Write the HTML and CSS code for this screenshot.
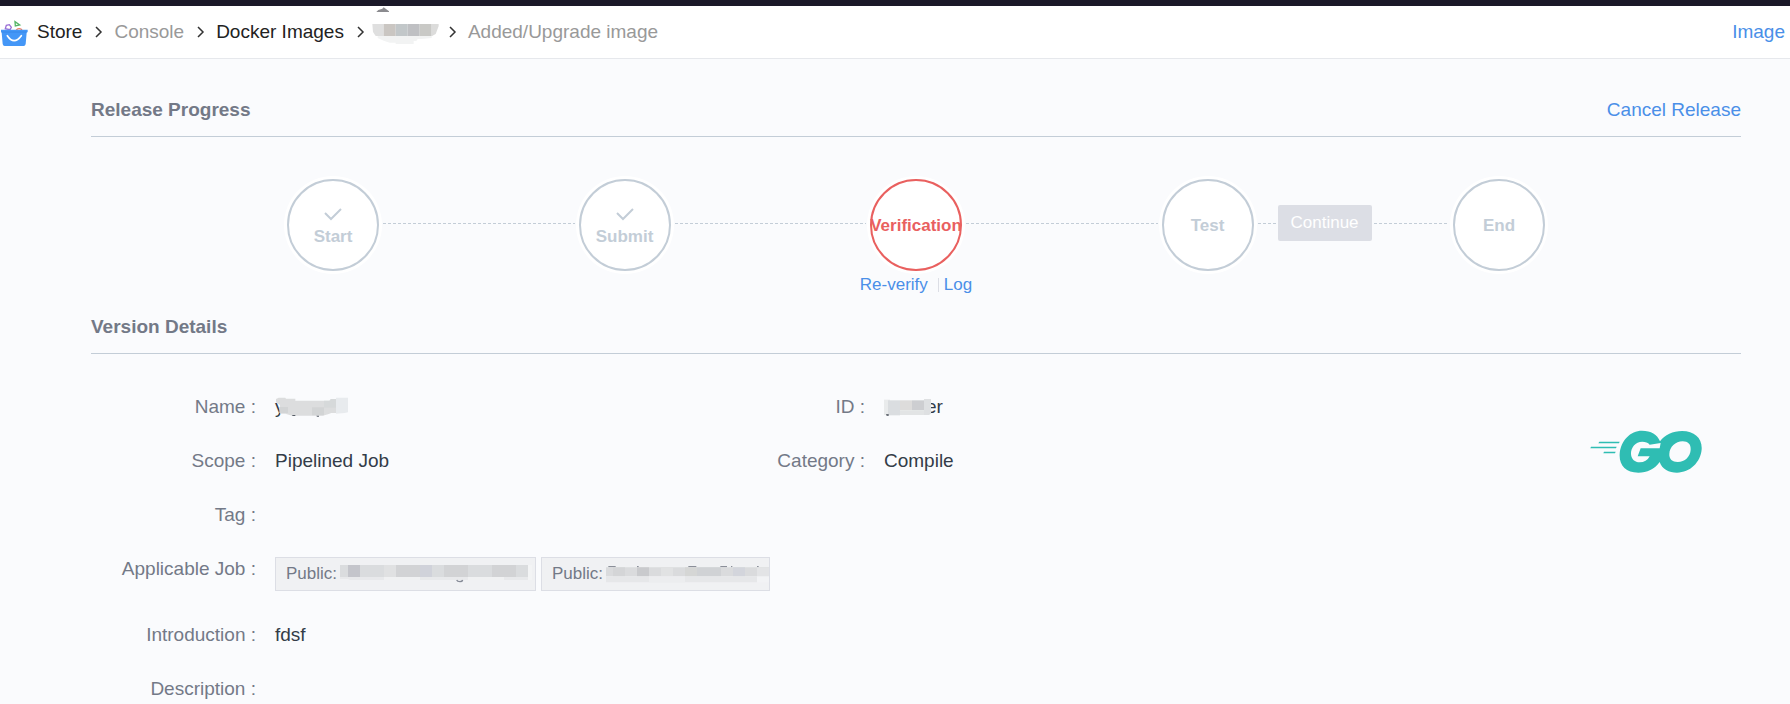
FILE: index.html
```html
<!DOCTYPE html>
<html lang="en">
<head>
<meta charset="utf-8">
<title>Release Progress</title>
<link rel="stylesheet" href="styles.css">
</head>
<body>
<div class="topbar"></div>
<header class="header">
  <nav class="crumbs" aria-label="Breadcrumb">
    <svg class="store-icon" width="28" height="28" viewBox="0 0 84 84" aria-hidden="true">
      <path d="M16 32l3-10 9-2 6 8-4 7z" fill="#fff" stroke="#9b6fd6" stroke-width="4"/>
      <path d="M45 11l1 13 13-3z" fill="#fff" stroke="#56b568" stroke-width="4"/>
      <path d="M49 37a9 8 0 0 1 17 0" fill="none" stroke="#ee7a58" stroke-width="4"/>
      <path d="M3 35h80v7l-3 2-3 34q-1 6-6 6H14q-5 0-6-6L5 44l-2-2z" fill="#4497f7"/>
      <path d="M5 42h74" stroke="#3282e4" stroke-width="2"/>
      <path d="M22 53q20 30 42 0" fill="none" stroke="#fff" stroke-width="5" stroke-linecap="round"/>
    </svg>
    <a class="crumb dark store" href="#">Store</a>
    <svg class="chev" width="8" height="12" viewBox="0 0 8 12"><path d="M1 1l5 5-5 5"/></svg>
    <a class="crumb" href="#">Console</a>
    <svg class="chev" width="8" height="12" viewBox="0 0 8 12"><path d="M1 1l5 5-5 5"/></svg>
    <a class="crumb dark" href="#">Docker Images</a>
    <svg class="chev" width="8" height="12" viewBox="0 0 8 12"><path d="M1 1l5 5-5 5"/></svg>
    <svg class="masked" width="67" height="50" viewBox="67 21 201 150" aria-hidden="true">
      <path d="M80 36l6-6 12-4 4-4 6 4 10 8v2z" fill="#8b8b8f"/>
      <path d="M68 72h34v36H78l-8-12z" fill="#dfdfdf"/>
      <path d="M102 72h36v36h-36z" fill="#cac6c2"/>
      <path d="M138 72h36v36h-36z" fill="#c2c7c9"/>
      <path d="M174 72h36v36h-36z" fill="#bfc0c3"/>
      <path d="M210 72h36v36h-36z" fill="#c9c9c6"/>
      <path d="M246 72h21v6l-9 24-12 7z" fill="#dcdcdb"/>
      <path d="M84 108h162v6l-30 3h-12l-4 6h-8v9h-54v-4h-18l-18-6-18-8z" fill="#f2f3f3"/>
    </svg>
    <svg class="chev" width="8" height="12" viewBox="0 0 8 12"><path d="M1 1l5 5-5 5"/></svg>
    <span class="crumb">Added/Upgrade image</span>
  </nav>
  <a class="link" href="#">Image</a>
</header>

<main class="page">
  <section>
    <div class="section-head">
      <h2>Release Progress</h2>
      <a class="link" href="#">Cancel Release</a>
    </div>
    <div class="progress">
      <div class="step">
        <div class="circle">
          <svg class="check" width="18" height="13" viewBox="0 0 18 13"><path d="M1 5l6 6L17 1"/></svg>
          <span>Start</span>
        </div>
      </div>
      <div class="track"><i class="dash"></i></div>
      <div class="step">
        <div class="circle">
          <svg class="check" width="18" height="13" viewBox="0 0 18 13"><path d="M1 5l6 6L17 1"/></svg>
          <span>Submit</span>
        </div>
      </div>
      <div class="track"><i class="dash"></i></div>
      <div class="step">
        <div class="circle failed"><span>Verification</span></div>
        <div class="step-links">
          <a class="link" href="#">Re-verify</a>
          <a class="link divided" href="#">Log</a>
        </div>
      </div>
      <div class="track"><i class="dash"></i></div>
      <div class="step"><div class="circle"><span>Test</span></div></div>
      <div class="track">
        <i class="dash short"></i>
        <button class="continue" type="button" disabled>Continue</button>
        <i class="dash"></i>
      </div>
      <div class="step"><div class="circle"><span>End</span></div></div>
    </div>
  </section>

  <section>
    <div class="section-head">
      <h2>Version Details</h2>
    </div>
    <div class="details">
      <dl class="fields">
        <div class="field">
          <dt>Name :</dt>
          <dd class="covered">y
            <svg class="cover" width="73" height="20" viewBox="585 292 219 60" aria-hidden="true">
              <path d="M588 298l8-4h20l2 3h28v6h102l4-5h16v42h-14l-10 4-16 4h-92l-20-6h-16v-26l-12-8z" fill="#dcddde"/>
              <path d="M598 322h26v18h-26zM696 323h36v24h-36z" fill="#d2d4d5"/>
              <path d="M732 303h18l4-5h14v26h-36z" fill="#d6d9da"/>
              <path d="M768 294h36v44l-10 2-26 2z" fill="#e8ebee"/>
              <path d="M636 346h10v3h-8zM709 348h8v3h-6z" fill="#555c66"/>
            </svg>
          </dd>
        </div>
        <div class="field">
          <dt>ID :</dt>
          <dd class="inline">
            <svg class="lead" width="47" height="17" viewBox="372 50 141 51" aria-hidden="true">
              <path d="M372 52h18v46h-18z" fill="#e9ebec"/>
              <path d="M384 54h36v45h-36z" fill="#dadde0"/>
              <path d="M420 54h36v30h-36z" fill="#dddcdb"/>
              <path d="M456 54h36v30h-36z" fill="#cdced1"/>
              <path d="M420 84h72v14h-72z" fill="#e2e4e5"/>
              <path d="M492 50h21v44l-6 4h-15z" fill="#dee0e2"/>
              <path d="M378 96h8v4h-6z" fill="#3f4650"/>
            </svg>er</dd>
        </div>
        <div class="field"><dt>Scope :</dt><dd>Pipelined Job</dd></div>
        <div class="field"><dt>Category :</dt><dd>Compile</dd></div>
        <div class="field wide"><dt>Tag :</dt><dd></dd></div>
        <div class="field wide jobs">
          <dt>Applicable Job :</dt>
          <dd class="chips">
            <span class="chip">Public:
              <svg width="192" height="18" viewBox="240 102 576 54" aria-hidden="true">
                <path d="M240 102h564v36H240z" fill="#dadcde"/>
                <path d="M264 102h36v36h-36z" fill="#c4c5cb"/>
                <path d="M372 102h36v36h-36z" fill="#e0e1e2"/>
                <path d="M408 102h72v36h-72zM552 102h72v36h-72zM696 102h72v36h-72z" fill="#d2d3d5"/>
                <path d="M480 102h36v36h-36z" fill="#d0d2da"/>
                <path d="M240 138h564v9H270l-6-3h-24z" fill="#e8e9eb"/>
                <path d="M372 138h108v9H372zM624 138h108v9H624z" fill="#f0f1f2"/>
                <path d="M804 102h12v45h-12z" fill="#f3f4f5"/>
                <path d="M590 147q2 5 10 5 7 0 8-5" fill="none" stroke="#858a96" stroke-width="4"/>
              </svg>
            </span>
            <span class="chip flush">Public:
              <svg width="163" height="18" viewBox="1035 104 489 54" aria-hidden="true">
                <path d="M1042 109h22M1128 109h5M1282 109h24M1378 109h20M1410 109h4M1488 109h5" stroke="#8b8f99" stroke-width="4"/>
                <path d="M1035 111h489v27h-489z" fill="#dadbdd"/>
                <path d="M1056 111h36v27h-36z" fill="#d4d5d7"/>
                <path d="M1128 111h36v27h-36z" fill="#c9cacd"/>
                <path d="M1200 111h36v27h-36z" fill="#e1e2e3"/>
                <path d="M1272 111h36v27h-36z" fill="#d5d6d5"/>
                <path d="M1308 111h72v27h-72z" fill="#d0d2d5"/>
                <path d="M1416 111h36v27h-36z" fill="#d3d5dc"/>
                <path d="M1488 111h36v27h-36z" fill="#e3e4e6"/>
                <path d="M1035 138h453v18h-453z" fill="#e6e7e9"/>
                <path d="M1164 138h108v18h-108z" fill="#ecedef"/>
                <path d="M1488 138h36v18h-36z" fill="#f2f3f5"/>
              </svg>
            </span>
          </dd>
        </div>
        <div class="field wide"><dt>Introduction :</dt><dd>fdsf</dd></div>
        <div class="field wide"><dt>Description :</dt><dd></dd></div>
      </dl>
      <div class="logo">
        <svg width="112" height="43" viewBox="58 58 336 129" role="img" aria-label="Go logo">
          <path d="M86 93h61l-2 5H83zM61 108h77l-2 5H59zM100 123h35l-2 5H98z" fill="#2fbdb3"/>
          <path fill="#2fbdb3" d="M214 60c27 0 46 11 54 32 14-19 39-31 66-31 38 0 61 22 59 55-3 39-35 70-74 70-24 0-45-10-52-32-15 22-38 32-64 32-38 0-58-23-56-56 3-40 32-70 67-70z"/>
          <path fill="#fafbfd" d="M237 102c-5-7-13-9-22-9-21 0-35 18-34 37 1 16 12 25 26 25 13 0 24-6 30-18h-36l9-24h57l3-16z"/>
          <path fill="#fafbfd" d="M336 92c-22 0-39 17-40 38-1 15 9 24 25 24 22 0 38-17 39-37 1-16-8-25-24-25z"/>
        </svg>
      </div>
    </div>
  </section>
</main>
</body>
</html>
```

FILE: styles.css
```css
* {
  box-sizing: border-box;
}

body {
  margin: 0;
  background: #fafbfd;
  color: #333c48;
  font-family: "Liberation Sans", Arial, sans-serif;
  font-size: 19px;
  line-height: 24px;
}

a {
  text-decoration: none;
}

svg {
  display: block;
  flex: none;
}

.link {
  color: #4a8fe8;
}

.topbar {
  height: 6px;
  background: #1a1828;
}

.header {
  display: flex;
  align-items: center;
  justify-content: space-between;
  height: 53px;
  padding-right: 5px;
  background: #fff;
  border-bottom: 1px solid #e6e8ec;
}

.crumbs {
  display: flex;
  align-items: center;
  gap: 12px;
}

.crumb {
  color: #999;
}

.crumb.dark {
  color: #222;
}

.store-icon {
  margin-right: -3px;
}

.chev {
  margin: 0 -1px 0 1px;
  fill: none;
  stroke: #333;
  stroke-width: 1.5;
}

.masked {
  margin: 0 -3px 0 -4px;
}

.page {
  padding: 39px 49px 0 91px;
}

.section-head {
  display: flex;
  justify-content: space-between;
  padding-bottom: 14px;
  border-bottom: 1px solid #c3cdd7;
}

h2 {
  margin: 0;
  color: #737987;
  font-size: 19px;
  font-weight: bold;
}

.progress {
  display: flex;
  align-items: flex-start;
  padding: 42px 196px 20px;
  font-size: 17px;
}

.step {
  display: flex;
  flex: none;
  flex-direction: column;
  align-items: center;
  width: 92px;
  height: 116px;
}

.circle {
  display: flex;
  flex: none;
  flex-direction: column;
  align-items: center;
  justify-content: center;
  width: 92px;
  height: 92px;
  padding-top: 2px;
  border: 2px solid #c3cdd7;
  border-radius: 50%;
  background: #fff;
  box-shadow: 0 0 0 3px #fff;
  color: #c3cdd7;
  font-weight: bold;
}

.circle.failed {
  border-color: #e9605f;
  color: #e9605f;
}

.check {
  margin: 4px 0;
  fill: none;
  stroke: #c3cdd7;
  stroke-width: 2;
}

.track {
  display: flex;
  flex: 1;
  align-items: center;
  height: 88px;
  padding: 0 4px;
}

.dash {
  flex: 1;
  height: 1px;
  background: repeating-linear-gradient(90deg, #c3cdd7 0 3px, transparent 3px 5px);
}

.dash.short {
  flex: 0 0 20px;
}

.continue {
  height: 36px;
  margin-right: 2px;
  padding: 0 13px;
  border: 0;
  border-radius: 2px;
  background: #dcdee5;
  color: #fff;
  font: inherit;
}

.step-links {
  display: flex;
  gap: 10px;
  padding-top: 2px;
  white-space: nowrap;
}

.divided {
  display: flex;
  align-items: center;
  gap: 5px;
}

.divided::before {
  width: 1px;
  height: 14px;
  background: #dcdee5;
  content: "";
}

.details {
  display: grid;
  grid-template-columns: 1218fr 432fr;
  padding-top: 41px;
}

.fields {
  display: grid;
  grid-template-columns: 1fr 1fr;
  row-gap: 30px;
  margin: 0;
}

.field {
  display: grid;
  grid-template-columns: 165px 1fr;
  column-gap: 19px;
  min-height: 24px;
}

.wide {
  grid-column: 1 / -1;
}

dt {
  color: #737987;
  text-align: right;
}

dd {
  margin: 0;
}

.inline {
  display: flex;
  align-items: center;
}

.lead {
  z-index: 1;
  margin-right: -5px;
}

.covered {
  position: relative;
}

.cover {
  position: absolute;
  top: 2px;
  left: 0;
}

.chips {
  display: flex;
  gap: 5px;
}

.jobs {
  padding-bottom: 2px;
}

.chip {
  display: flex;
  align-items: center;
  gap: 3px;
  height: 34px;
  padding: 0 3px 0 10px;
  border: 1px solid #dcdee5;
  background: #f0f1f3;
  color: #737987;
  font-size: 17px;
}

.flush {
  padding-right: 0;
}

.logo {
  display: flex;
  justify-content: flex-end;
  padding: 35px 39px 0 0;
}
```
